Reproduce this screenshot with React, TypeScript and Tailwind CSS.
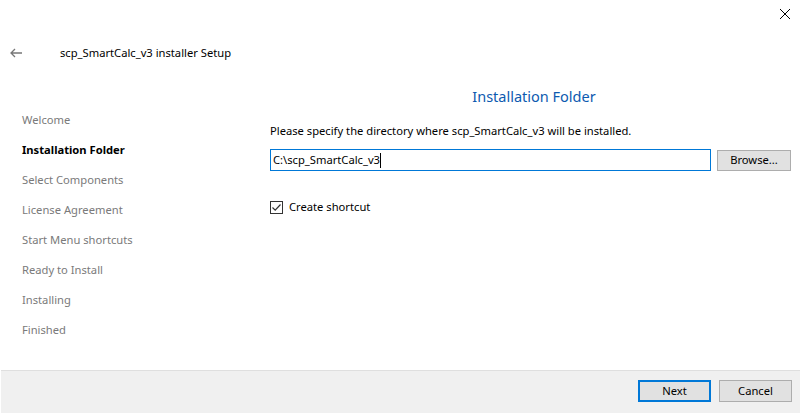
import React from "react";

const steps = [
  "Welcome",
  "Installation Folder",
  "Select Components",
  "License Agreement",
  "Start Menu shortcuts",
  "Ready to Install",
  "Installing",
  "Finished",
];

const App: React.FC = () => {
  const active = 1;

  return (
    <div
      className="w-[802px] h-[413px] bg-white flex flex-col text-[11.2px] text-black overflow-hidden"
      style={{ fontFamily: '"Noto Sans", "Open Sans", sans-serif' }}
    >
      {/* title bar */}
      <div className="h-[30px] flex justify-end items-start pr-[11px] pt-[8px]">
        <svg width="12" height="12" viewBox="0 0 12 12">
          <path d="M1 1 L11 11 M11 1 L1 11" stroke="#000" strokeWidth="1" fill="none" />
        </svg>
      </div>

      <div className="h-[46px] flex items-center">
        <div className="w-[60px] pl-[10px] flex items-center">
          <svg width="12" height="10" viewBox="0 0 12 10">
            <path d="M5 1 L1 5 L5 9 M1 5 H12" stroke="#777" strokeWidth="1.3" fill="none" />
          </svg>
        </div>
        <span>scp_SmartCalc_v3 installer Setup</span>
      </div>

      <div className="flex flex-1">
        {/* steps */}
        <div className="w-[270px] pl-[22px] pt-[29px] flex flex-col">
          {steps.map((s, i) => (
            <div
              key={s}
              className={
                i === active
                  ? "h-[30px] flex items-center font-bold text-black"
                  : "h-[30px] flex items-center text-[#7a7a7a]"
              }
            >
              {s}
            </div>
          ))}
        </div>

        {/* page */}
        <div className="w-[528px] pt-[10px] flex flex-col">
          <div className="h-[22px] flex items-center justify-center text-[14.5px] text-[#0d5ab0]">
            Installation Folder
          </div>
          <div className="h-[26px] mt-[10px] flex items-center">
            Please specify the directory where scp_SmartCalc_v3 will be installed.
          </div>
          <div className="flex gap-[6px] mt-[5px] w-[521px]">
            <div className="w-[441px] h-[22px] border border-[#0078d7] flex items-center pl-[2px]">
              <span>C:\scp_SmartCalc_v3</span>
              <span className="w-px h-[15px] bg-black"></span>
            </div>
            <button className="w-[74px] h-[21px] mt-px bg-[#e1e1e1] border border-[#adadad] flex items-center justify-center">
              Browse...
            </button>
          </div>
          <div className="flex items-center gap-[6px] mt-[28px]">
            <div className="w-[13px] h-[13px] border border-[#333] flex items-center justify-center">
              <svg width="11" height="11" viewBox="0 0 11 11">
                <path d="M1.5 5.5 L4.2 8.2 L9.5 2.5" stroke="#333" strokeWidth="1.2" fill="none" />
              </svg>
            </div>
            <span>Create shortcut</span>
          </div>
        </div>
      </div>

      {/* footer */}
      <div className="h-[43px] ml-px mr-[2px] bg-[#f0f0f0] border-t border-[#dfdfdf] flex justify-end items-start pt-[9px] pr-[8px] gap-[8px]">
        <button className="w-[73px] h-[22px] bg-[#e1e1e1] border-2 border-[#0078d7] flex items-center justify-center">
          Next
        </button>
        <button className="w-[73px] h-[22px] bg-[#e1e1e1] border border-[#adadad] flex items-center justify-center">
          Cancel
        </button>
      </div>
    </div>
  );
};

export default App;
